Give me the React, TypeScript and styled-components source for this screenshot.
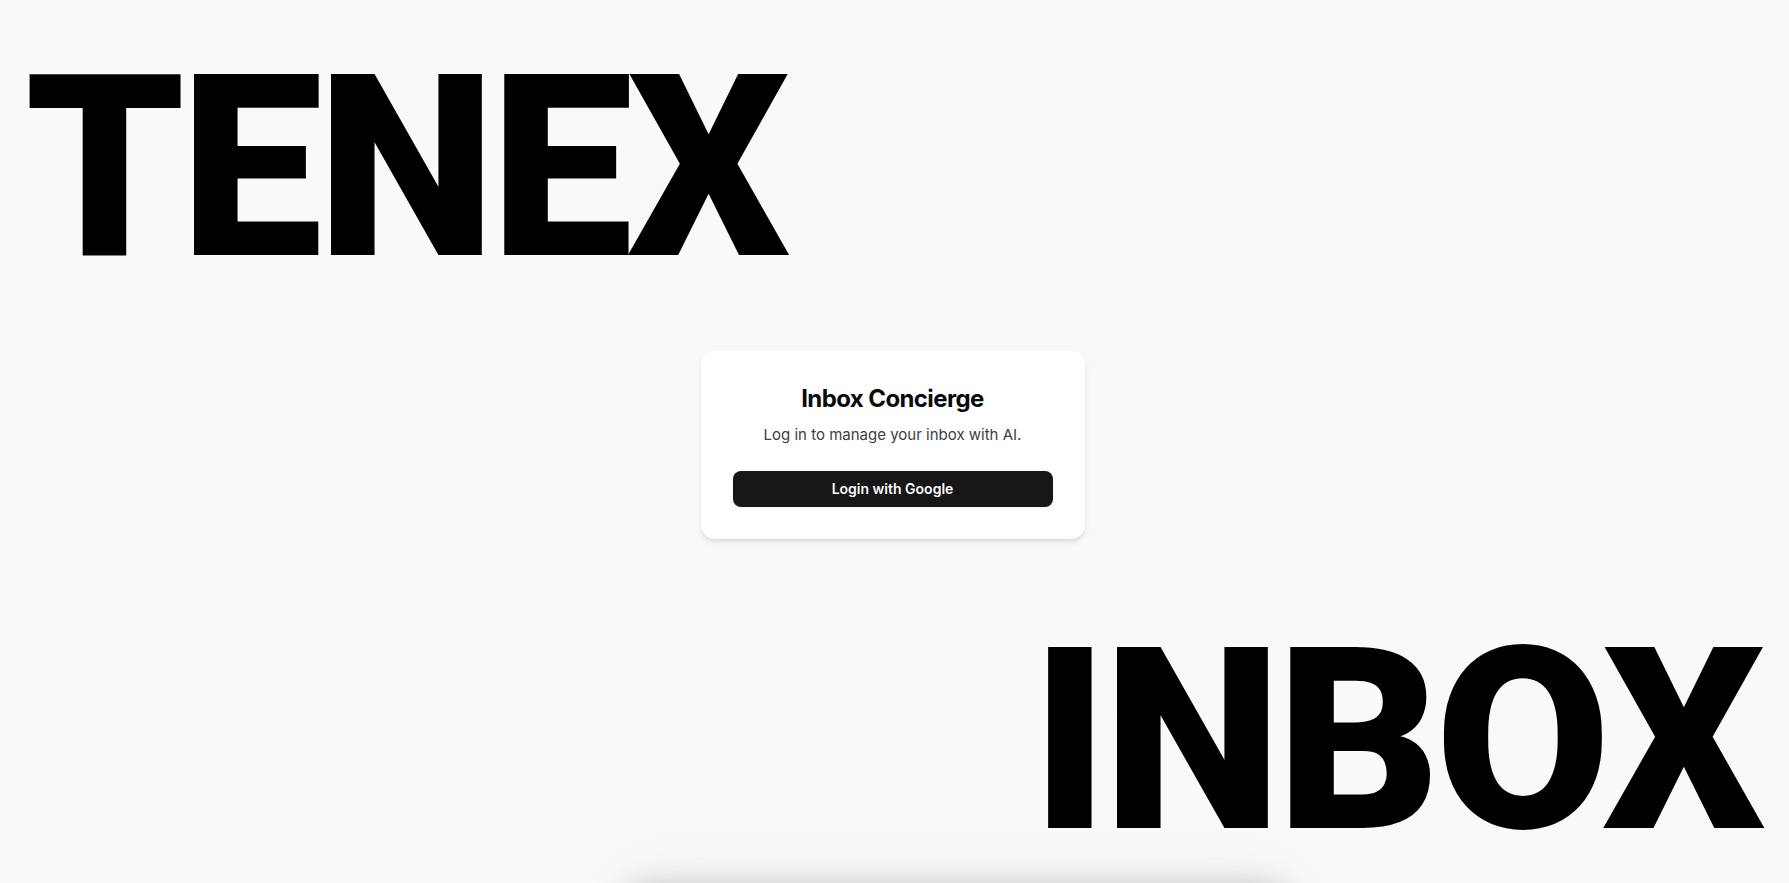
import React from 'react';
import styled, { createGlobalStyle } from 'styled-components';

const GlobalStyle = createGlobalStyle`
  *, *::before, *::after { box-sizing: border-box; }
  body {
    margin: 0;
    background: #f9f9f9;
    color: #0a0a0a;
    font-family: Inter, "Liberation Sans", sans-serif;
    -webkit-font-smoothing: antialiased;
  }
`;

const Page = styled.main`
  position: relative;
  display: flex;
  flex-direction: column;
  justify-content: space-between;
  align-items: center;
  min-height: 100vh;
  padding: 40px 29px 14px 25px;
  overflow: hidden;
`;

const Banner = styled.div<{ $align: 'flex-start' | 'flex-end' }>`
  align-self: ${({ $align }) => $align};
  color: #000;
  font-family: Roboto, sans-serif;
  font-size: 254px;
  font-weight: 900;
  line-height: 256px;
  letter-spacing: -0.02em;
  white-space: nowrap;
`;

const Card = styled.section`
  width: 384px;
  max-width: 100%;
  margin-bottom: 20px;
  padding: 32px;
  border-radius: 14px;
  background: #fff;
  box-shadow: 0 4px 6px -1px rgba(0, 0, 0, 0.1), 0 2px 4px -2px rgba(0, 0, 0, 0.1);
  text-align: center;
`;

const Title = styled.h1`
  margin: 0 0 8px;
  font-size: 24px;
  line-height: 32px;
  font-weight: 700;
  letter-spacing: -0.025em;
`;

const Lead = styled.p`
  margin: 0 0 24px;
  color: #404040;
  font-size: 15px;
  line-height: 24px;
`;

const LoginButton = styled.button`
  display: block;
  width: 100%;
  height: 36px;
  border: 0;
  border-radius: 8px;
  background: #171717;
  color: #fafafa;
  box-shadow: 0 1px 2px rgba(0, 0, 0, 0.05);
  font-family: inherit;
  font-size: 14px;
  line-height: 20px;
  font-weight: 600;
  cursor: pointer;
`;

const BottomShade = styled.div`
  position: absolute;
  top: 100%;
  left: 50%;
  width: 656px;
  height: 80px;
  margin-left: -266px;
  border-radius: 12px;
  box-shadow: 0 8px 32px rgba(0, 0, 0, 0.25), 0 0 64px rgba(0, 0, 0, 0.06);
`;

export default function App() {
  return (
    <>
      <GlobalStyle />
      <Page>
        <Banner $align="flex-start">TENEX</Banner>
        <Card>
          <Title>Inbox Concierge</Title>
          <Lead>Log in to manage your inbox with AI.</Lead>
          <LoginButton type="button">Login with Google</LoginButton>
        </Card>
        <Banner $align="flex-end">INBOX</Banner>
        <BottomShade aria-hidden="true" />
      </Page>
    </>
  );
}
